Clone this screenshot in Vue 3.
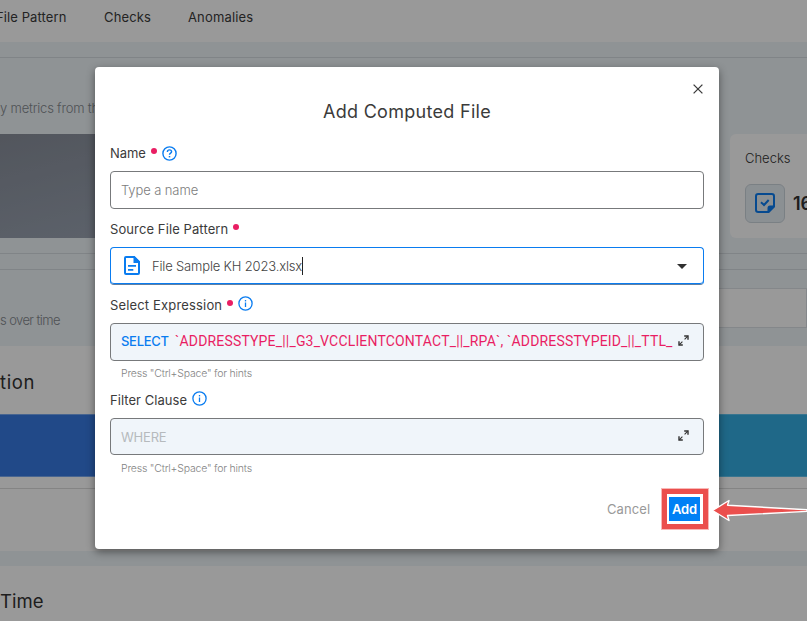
<script setup>
const tabs = [
  { label: 'File Pattern', cls: 'tab-pattern' },
  { label: 'Checks', cls: 'tab-checks' },
  { label: 'Anomalies', cls: 'tab-anomalies' },
]
</script>

<template>
  <div class="screen">
    <div class="page">
      <nav class="tabs">
        <span v-for="t in tabs" :key="t.label" :class="t.cls">{{ t.label }}</span>
      </nav>
      <section class="intro"><p class="muted metrics">y metrics from the</p></section>
      <section class="cards">
        <div class="banner"></div>
        <div class="stat">
          <span class="stat-title">Checks</span>
          <div class="stat-row">
            <div class="stat-icon">
              <svg width="20" height="20" viewBox="0 0 20 20"><path d="M3.2 1H16.8Q19 1 19 3.2V13L13 19H3.2Q1 19 1 16.8V3.2Q1 1 3.2 1Z" fill="none" stroke="#0a7cf0" stroke-width="2" /><path d="M20 12.5V14L14 20H12.5V15Q12.5 12.5 15 12.5Z" fill="#0a7cf0" /><path d="M6 9.2L9 12L13.7 7" fill="none" stroke="#0a7cf0" stroke-width="2" /></svg>
            </div>
            <b>16</b>
          </div>
        </div>
      </section>
      <div class="rule-band"></div>
      <section class="trend"><p class="muted overtime">s over time</p><div class="trend-select"></div></section>
      <section class="panel">
        <h2 class="h-tion">tion</h2>
        <div class="bar"><div class="blue"></div><div class="teal"></div></div>
        <div class="panel-rule"></div>
      </section>
      <section class="panel next"><h2 class="h-time">Time</h2></section>
    </div>

    <div class="overlay">
      <div class="modal">
        <header>
          <svg class="close" width="10" height="10" viewBox="0 0 10 10"><path d="M.6 .6L9.4 9.4M9.4 .6L.6 9.4" stroke="#3b3b3b" stroke-width="1.3" /></svg>
          <h1><span>Add Computed File</span></h1>
        </header>

        <div class="label"><span class="l-name">Name</span><i class="dot"></i>
          <svg class="info" width="15" height="15" viewBox="0 0 15 15"><circle cx="7.5" cy="7.5" r="6.6" fill="none" stroke="#0a7cf0" stroke-width="1.4" /><path d="M5.4 6Q5.4 3.9 7.5 3.9Q9.6 3.9 9.6 5.8C9.6 7.2 7.5 7.2 7.5 8.8" fill="none" stroke="#0a7cf0" stroke-width="1.4" /><path d="M7.5 10V11.4" stroke="#0a7cf0" stroke-width="1.5" /></svg>
        </div>
        <div class="field"><span class="placeholder">Type a name</span></div>

        <div class="label"><span class="l-source">Source File Pattern</span><i class="dot"></i></div>
        <div class="field focused">
          <svg class="file" width="16" height="19" viewBox="0 0 16 19"><path d="M2 1H10L15 6V17Q15 18 14 18H2Q1 18 1 17V2Q1 1 2 1Z" fill="none" stroke="#0a7cf0" stroke-width="2" /><path d="M9.5 0H10.5L16 5.5V7H9.5ZM4 9H12V10.8H4ZM4 13H9.3V14.8H4Z" fill="#0a7cf0" /></svg>
          <span class="file-name">File Sample KH 2023.xlsx</span><i class="caret"></i>
          <svg class="arrow-down" width="10" height="5" viewBox="0 0 10 5"><path d="M0 0H10L5 5Z" fill="#303030" /></svg>
        </div>

        <div class="label"><span class="l-select">Select Expression</span><i class="dot"></i>
          <svg class="info up" width="15" height="15" viewBox="0 0 15 15"><circle cx="7.5" cy="7.5" r="6.6" fill="none" stroke="#0a7cf0" stroke-width="1.3" /><path d="M7.5 6.5V11" stroke="#0a7cf0" stroke-width="1.3" /><path d="M7.5 4V5.4" stroke="#0a7cf0" stroke-width="1.3" /></svg>
        </div>
        <div class="field code">
          <span class="kw">SELECT</span>
          <span class="expr">`ADDRESSTYPE_||_G3_VCCLIENTCONTACT_||_RPA`, `ADDRESSTYPEID_||_TTL_</span>
          <svg class="expand" width="11" height="11" viewBox="0 0 11 11"><path d="M6.2 1H10V4.8M1 6.2V10H4.8" fill="none" stroke="#333" stroke-width="1.4" /><path d="M9.8 1.2L6.6 4.4M1.2 9.8L4.4 6.6" stroke="#333" stroke-width="1.1" /></svg>
        </div>
        <p class="hint"><span>Press "Ctrl+Space" for hints</span></p>

        <div class="label filter"><span class="l-filter">Filter Clause</span>
          <svg class="info up" width="15" height="15" viewBox="0 0 15 15"><circle cx="7.5" cy="7.5" r="6.6" fill="none" stroke="#0a7cf0" stroke-width="1.3" /><path d="M7.5 6.5V11" stroke="#0a7cf0" stroke-width="1.3" /><path d="M7.5 4V5.4" stroke="#0a7cf0" stroke-width="1.3" /></svg>
        </div>
        <div class="field code where-field">
          <span class="where">WHERE</span>
          <svg class="expand" width="11" height="11" viewBox="0 0 11 11"><path d="M6.2 1H10V4.8M1 6.2V10H4.8" fill="none" stroke="#333" stroke-width="1.4" /><path d="M9.8 1.2L6.6 4.4M1.2 9.8L4.4 6.6" stroke="#333" stroke-width="1.1" /></svg>
        </div>
        <p class="hint second"><span>Press "Ctrl+Space" for hints</span></p>

        <footer>
          <span class="cancel">Cancel</span>
          <div class="highlight"><button>Add</button></div>
        </footer>
      </div>
      <svg class="pointer" width="96" height="24" viewBox="0 0 96 24"><path d="M1.5 11.5L18 1.5L16.5 6.2L96 10.8V12.4L16.5 16.5L18 21.5Z" fill="#eb4f4d" stroke="#fff" stroke-width="1.4" stroke-linejoin="round" /></svg>
    </div>
  </div>
</template>

<style>
body { margin: 0; overflow: hidden; }
</style>

<style scoped>
* { box-sizing: border-box; }
h1, h2, p { margin: 0; font-weight: 400; }
.screen { position: relative; width: 807px; height: 621px; overflow: hidden; font-family: Inter, "Liberation Sans", sans-serif; font-size: 13px; color: #3b3b3b; white-space: nowrap; }
.page { display: flex; flex-direction: column; height: 621px; background: #eff5f9; }
.tabs { display: flex; height: 42px; background: #fff; line-height: 35px; }
.tabs span { flex: none; }
.tab-pattern { width: 108px; margin-left: -4px; letter-spacing: .1px; }
.tab-checks { width: 84px; letter-spacing: .15px; }
.tab-anomalies { letter-spacing: .15px; }
.intro { height: 92px; padding-top: 15px; }
.metrics { height: 77px; border-top: 1px solid #d5dce1; line-height: 101px; letter-spacing: -.2px; }
.muted { color: #858a8e; font-weight: 300; }
.overtime { line-height: 65px; letter-spacing: -.6px; }
.cards { display: flex; justify-content: space-between; height: 104px; }
.banner { width: 400px; background: linear-gradient(165deg, #898f9b, #a4afbf); }
.stat { width: 77px; padding: 15px 0 0 15px; background: #fff; border-radius: 6px 0 0 6px; overflow: hidden; color: #555; }
.stat-title { display: block; height: 35px; line-height: 19px; font-weight: 300; color: #333; }
.stat-row { display: flex; align-items: center; gap: 8px; }
.stat-icon { display: flex; flex: none; align-items: center; justify-content: center; width: 40px; height: 39px; padding-bottom: 2px; border: 1px solid #ccd5dc; border-radius: 6px; background: #e8f0f6; }
.stat-row b { color: #333; font-size: 18px; font-weight: 600; }
.rule-band { height: 17px; margin-top: 15px; border-top: 1px solid #d5dce1; border-bottom: 1px solid #d5dce1; }
.trend { display: flex; justify-content: space-between; height: 76px; padding-top: 18px; }
.trend-select { width: 300px; height: 40px; border: 1px solid #dde2e6; background: #fff; }
.panel { height: 205px; background: #fff; }
h2 { font-size: 18.5px; line-height: 73px; color: #333; }
.panel h2 { height: 68px; letter-spacing: .6px; }
.bar { display: flex; height: 63px; }
.blue, .teal { flex: 1; border-top: 1px solid #79a9f0; border-bottom: 1px solid #79a9f0; }
.blue { background: #377be3; }
.teal { background: #35ade3; border-color: #60c4ef; }
.panel-rule { height: 12px; border-bottom: 1px solid #ddd; }
.panel.next { height: 55px; margin-top: 15px; }
.panel.next h2 { line-height: 71px; letter-spacing: 0; }
.overlay { position: absolute; inset: 0; background: rgba(0, 0, 0, .4); padding: 67px 0 0 95px; }
.modal { width: 624px; height: 482px; padding: 0 15px; border-radius: 4px; background: #fff; box-shadow: 0 3px 8px rgba(0, 0, 0, .45); }
header { height: 76px; padding-top: 17px; }
.close { display: block; margin: 0 1px 0 auto; }
h1 { height: 34px; line-height: 35px; text-align: center; font-size: 18px; letter-spacing: .3px; }
.label { display: flex; align-items: center; height: 20px; line-height: 20px; margin-bottom: 8px; }
.l-name { letter-spacing: -.1px; }
.l-source { letter-spacing: .1px; }
.l-select { letter-spacing: .16px; }
.l-filter { letter-spacing: .05px; }
.field + .label { margin-top: 10px; }
.dot { width: 6px; height: 6px; border-radius: 50%; background: #e91e63; margin: -5px 0 0 5px; }
.info { margin-left: 5px; }
.info.up { margin-top: -4px; }
.field { display: flex; align-items: center; width: 594px; height: 38px; padding: 0 10px; border: 1px solid #77797b; border-radius: 4px; }
.placeholder { color: #7c7c7c; font-weight: 300; letter-spacing: -.1px; }
.focused { border-color: #0a7cf0; border-bottom-color: #5f7fa3; box-shadow: inset 0 -1px 0 #0a7cf0; }
.file { margin: -1px 0 0 3px; }
.file-name { margin-left: 12px; color: #444; font-weight: 300; letter-spacing: -.17px; }
.caret { width: 1px; height: 18px; background: #222; }
.arrow-down { margin: 0 6px 0 auto; }
.code { background: #f0f5fa; }
.kw { width: 48px; margin-top: -2px; color: #0a7cf0; font-weight: 500; letter-spacing: -.3px; }
.expr { width: 499px; flex: none; margin: -2px 0 0 6px; overflow: hidden; color: #e91e63; font-family: Roboto, sans-serif; font-size: 14px; line-height: 20px; letter-spacing: .17px; }
.expand { flex: none; margin: -3px 4px 0 auto; }
.hint { height: 15px; margin: 5px 0 0 11px; color: #838383; font-size: 10.5px; font-weight: 300; line-height: 15px; letter-spacing: -.2px; }
.hint.second { margin-top: 6px; }
.filter { margin-top: 9px; }
.where-field { height: 37px; }
.where { color: #b6babd; letter-spacing: -.2px; }
footer { display: flex; align-items: center; height: 42px; padding-left: 497px; margin-top: 12px; }
.cancel { flex: none; width: 53.5px; color: #999; letter-spacing: .1px; }
.highlight { display: flex; flex: none; align-items: center; justify-content: center; width: 48px; height: 42px; border: 6px solid #eb4f4d; outline: 1px solid #f8b8b7; outline-offset: -1px; background: #fff; }
button { width: 31px; height: 24px; padding: 0; border: 0; background: #0080f5; color: #fff; font: 600 13px Inter, sans-serif; letter-spacing: -.2px; }
.pointer { position: absolute; left: 711px; top: 499px; }
</style>
